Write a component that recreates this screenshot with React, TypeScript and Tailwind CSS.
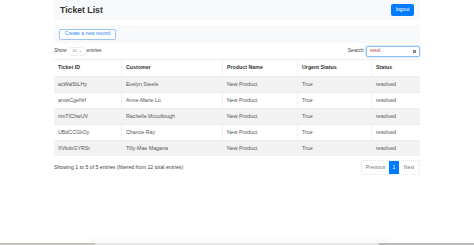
const rows = [
  ["acWalStLHy", "Evelyn Steele"],
  ["arvwCgeNrf", "Anne-Marie Lu"],
  ["rimTIChwUV", "Rachelle Mccullough"],
  ["UBdCCGiiOy", "Chance Ray"],
  ["XVkdvGYRSr", "Tilly-Mae Magana"],
];

export default function App() {
  return (
    <div className="relative h-[245px] w-[474px] overflow-hidden bg-white font-['Liberation_Sans',Arial,sans-serif] text-[#212529]">
      <div className="ml-[54px] w-[366px]">
        {/* top bar */}
        <div className="flex h-[20px] items-center justify-between bg-[#f8f9fa] pl-[6px] pr-[6px]">
          <span className="text-[8.7px] font-bold leading-none text-[#333]">Ticket List</span>
          <button className="flex h-[12px] w-[23px] items-center justify-center rounded-[2px] bg-[#007bff] text-[5px] text-white">
            logout
          </button>
        </div>

        {/* actions bar */}
        <div className="mt-[5px] flex h-[18px] items-center bg-[#f8f9fa] pl-[5px]">
          <button className="flex h-[11px] w-[57px] items-center justify-center rounded-[2px] border border-[#9cc5f5] bg-white text-[5px] text-[#2a86f0]">
            Create a new record
          </button>
        </div>

        {/* controls */}
        <div className="flex h-[16px] items-center justify-between text-[5px] text-[#444]">
          <div className="flex items-center">
            <span>Show</span>
            <span className="ml-[2px] mr-[1px] flex h-[9px] w-[17px] items-center justify-center gap-[2px] rounded-[2px] border border-[#f0f0f0] text-[4px] text-[#888]">
              10 <span className="text-[4px]">⌄</span>
            </span>
            <span>entries</span>
          </div>
          <div className="flex items-center">
            <span>Search:</span>
            <div className="ml-[1px] flex h-[11px] w-[54px] items-center justify-between rounded-[2px] border border-[#8fc1f5] px-[3px] shadow-[0_0_0_1px_rgba(0,123,255,0.15)]">
              <span className="text-[4.8px] text-[#b04a3a]">resol</span>
              <span className="h-[3px] w-[3px] bg-[#888]" />
            </div>
          </div>
        </div>

        {/* table */}
        <div className="border-t border-[#ececec] text-[5.3px]">
          <div className="grid h-[16px] grid-cols-[68px_101px_75px_74px_48px] items-stretch font-bold text-[#333]">
            {["Ticket ID", "Customer", "Product Name", "Urgent Status", "Status"].map((h, i) => (
              <div key={h} className={`flex items-center pl-[4px] ${i < 4 ? "border-r border-[#f2f2f2]" : ""}`}>
                {h}
              </div>
            ))}
          </div>
          {rows.map((r, idx) => (
            <div
              key={r[0]}
              className={`grid h-[16px] grid-cols-[68px_101px_75px_74px_48px] border-t border-[#ececec] text-[#555] ${
                idx % 2 === 0 ? "bg-[#f2f2f2]" : "bg-white"
              }`}
            >
              {[r[0], r[1], "New Product", "True", "resolved"].map((c, i) => (
                <div key={i} className={`flex items-center pl-[4px] ${i < 4 ? "border-r border-[#f0f0f0]" : ""}`}>
                  {c}
                </div>
              ))}
            </div>
          ))}
        </div>

        {/* footer */}
        <div className="mt-[4px] flex items-start justify-between text-[5.2px] text-[#444]">
          <span className="mt-[4px]">Showing 1 to 5 of 5 entries (filtered from 12 total entries)</span>
          <div className="flex h-[15px] items-stretch border border-dotted border-[#e4e4e4] text-[5px] text-[#777]">
            <span className="flex w-[27px] items-center justify-center">Previous</span>
            <span className="flex w-[10px] items-center justify-center bg-[#007bff] text-white">1</span>
            <span className="flex w-[20px] items-center justify-center">Next</span>
          </div>
        </div>
      </div>

      {/* bottom edge */}
      <div className="absolute bottom-[2px] left-[90px] h-[8px] w-[300px] bg-gradient-to-b from-white to-[#f8f8f8]" />
      <div className="absolute bottom-0 left-0 flex h-[2px] w-full">
        <div className="w-[95px] bg-[#c9c3b8]" />
        <div className="flex-1 bg-[#e6e6e8]" />
        <div className="w-[95px] bg-[#b9b9bb]" />
      </div>
    </div>
  );
}
